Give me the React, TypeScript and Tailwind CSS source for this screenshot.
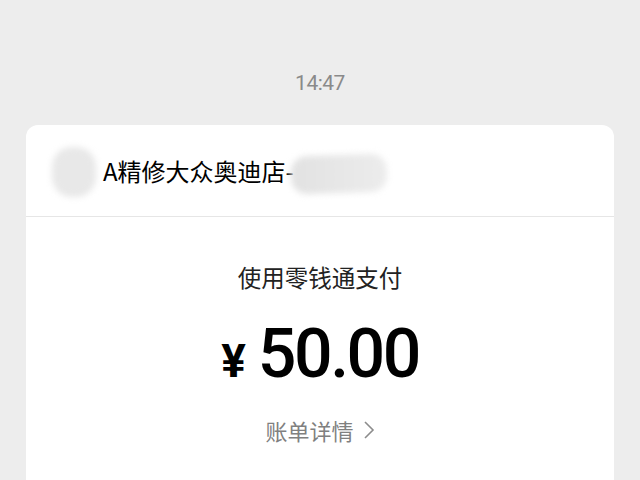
import React from "react";

const cjk = { fontFamily: '"Noto Sans CJK SC", "Noto Sans", sans-serif' };
const num = { fontFamily: 'Roboto, "Noto Sans", sans-serif' };

const App: React.FC = () => {
  return (
    <div className="w-[640px] h-[480px] overflow-hidden bg-[#ededed]" style={cjk}>
      <div className="pt-[69px] text-center">
        <span className="text-[21px] leading-[28px] text-[#8a8a8a] tracking-[-0.5px]" style={num}>
          14:47
        </span>
      </div>

      <div className="mx-[26px] mt-[28px] bg-white rounded-t-[12px] h-[400px]">
        <div className="h-[92px] flex items-center pl-[26px] border-b border-[#e6e6e6]">
          {/* blurred avatar */}
          <div className="w-[44px] h-[50px] rounded-[20px] bg-[#e8e8e8] blur-[3px] mt-[2px]" />
          <div className="relative ml-[7px] flex items-center">
            <span className="text-[24px] leading-[32px] text-black">A精修大众奥迪店-</span>
            <div className="absolute left-[188px] top-[0px] w-[96px] h-[38px] rounded-[16px] bg-gradient-to-r from-[#e2e2e2] to-[#ececec] blur-[3px] -rotate-2" />
          </div>
        </div>

        <div className="flex flex-col items-center pt-[44px]">
          <div className="text-[23.5px] leading-[32px] text-[#222]">使用零钱通支付</div>
          <div className="mt-[21px] flex items-baseline text-black" style={num}>
            <span className="text-[46px] font-bold leading-[80px] mr-[12px]">¥</span>
            <span className="text-[68px] font-medium leading-[80px] tracking-[-2.5px]">50.00</span>
          </div>
          <div className="mt-[14px] flex items-center text-[22px] leading-[30px] text-[#808080]">
            <span>账单详情</span>
            <svg width="12" height="20" viewBox="0 0 12 20" className="ml-[9px]" fill="none">
              <path d="M2 2 L10 10 L2 18" stroke="#8c8c8c" strokeWidth="1.6" />
            </svg>
          </div>
        </div>
      </div>
    </div>
  );
};

export default App;
